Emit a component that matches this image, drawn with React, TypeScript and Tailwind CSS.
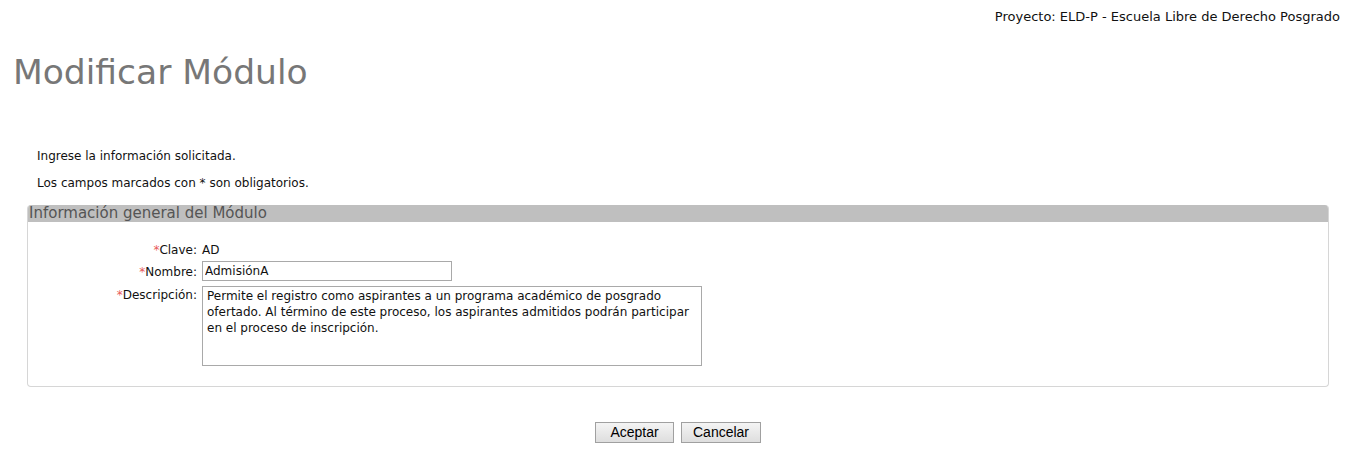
export default function App() {
  const font = "font-['DejaVu_Sans',Verdana,sans-serif]";
  return (
    <div className={`${font} min-h-[466px] bg-white text-[12px] text-[#111]`}>
      <div className="flex justify-end px-[7px] pt-[8px] text-[13px] leading-[17px]">
        Proyecto: ELD-P - Escuela Libre de Derecho Posgrado
      </div>
      <h1 className="mt-[27px] pl-[13px] text-[34.5px] leading-[40px] text-[#777]">Modificar Módulo</h1>

      <div className="mt-[56px] pl-[37px]">
        <p className="leading-[16px]">Ingrese la información solicitada.</p>
        <p className="mt-[11px] leading-[16px]">Los campos marcados con * son obligatorios.</p>
      </div>

      <div className="mx-[27px] mt-[14px] w-[1302px] overflow-hidden rounded-[4px] border border-t-0 border-[#d6d6d6]">
        <div className="h-[17px] bg-[#bfbfbf] pl-[1px] text-[15px] leading-[17px] text-[#555]">
          Información general del Módulo
        </div>
        <div className="grid grid-cols-[169px_1fr] gap-x-[5px] pt-[20px] pb-[20px]">
          <div className="text-right leading-[16px]">
            <span className="text-[#e85a5a]">*</span>Clave:
          </div>
          <div className="leading-[16px]">AD</div>

          <div className="mt-[6px] text-right leading-[16px]">
            <span className="text-[#e85a5a]">*</span>Nombre:
          </div>
          <div className="mt-[3px]">
            <input
              defaultValue="AdmisiónA"
              className="h-[20px] w-[250px] border border-[#a9a9a9] px-[2px] text-[12px] leading-[16px] outline-none"
            />
          </div>

          <div className="mt-[6px] text-right leading-[16px]">
            <span className="text-[#e85a5a]">*</span>Descripción:
          </div>
          <div className="mt-[5px]">
            <textarea
              defaultValue="Permite el registro como aspirantes a un programa académico de posgrado ofertado. Al término de este proceso, los aspirantes admitidos podrán participar en el proceso de inscripción."
              className="block h-[80px] w-[500px] resize-none border border-[#a9a9a9] px-[4px] py-[1px] text-[12px] leading-[16px] outline-none"
            />
          </div>
        </div>
      </div>

      <div className="mt-[35px] flex justify-center gap-[7px] pl-[9px] font-['Liberation_Sans',Arial,sans-serif]">
        <button className="h-[21px] w-[79px] border border-[#a0a0a0] bg-[linear-gradient(#f4f4f4,#dedede)] text-[14px] leading-[19px] text-black">
          Aceptar
        </button>
        <button className="h-[21px] w-[80px] border border-[#a0a0a0] bg-[linear-gradient(#f4f4f4,#dedede)] text-[14px] leading-[19px] text-black">
          Cancelar
        </button>
      </div>
    </div>
  );
}
